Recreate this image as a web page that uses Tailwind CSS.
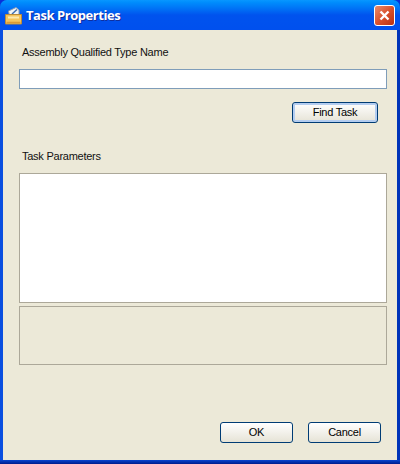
<!DOCTYPE html>
<html lang="en">
<head>
    <meta charset="UTF-8">
    <title>Task Properties</title>
    <script src="https://cdn.jsdelivr.net/npm/@tailwindcss/browser@4"></script>
</head>
<body class="w-[400px] h-[464px] overflow-hidden bg-[#0831d9]">
    <div class="w-[400px] h-[464px] flex flex-col rounded-t-[7px] overflow-hidden bg-gradient-to-r from-[#0a4fe0] via-[#0054e3] to-[#0033b8] font-['Liberation_Sans',sans-serif] text-[11px] tracking-[-0.25px] text-black">
        <!-- Title bar -->
        <div class="h-[30px] shrink-0 flex items-center pl-[5px] pr-[5px] bg-gradient-to-b from-[#0997ff] via-[#0053ee] to-[#0050ee]">
            <svg width="17" height="18" viewBox="0 0 17 18" class="shrink-0 mt-[1px]">
                <path d="M4.5 9 L3.5 4 L11 0.5 L14 3 L14 9 Z" fill="#f2f5f8" stroke="#8b9bb0"/>
                <path d="M7 7 L12 2.5" stroke="#3f6fb0" stroke-width="1.5"/>
                <path d="M0.5 7.5 L16.5 7.5 L16.5 17 L0.5 17 Z" fill="#f5c55e" stroke="#b98a3a"/>
                <path d="M3 10.5 L14 10.5" stroke="#fdeab0" stroke-width="2"/>
                <path d="M1.5 15.5 L15.5 15.5" stroke="#dc9a35" stroke-width="1.5"/>
            </svg>
            <span class="ml-[4px] text-[13px] leading-none font-bold text-white [text-shadow:1px_1px_0_#0f2f9f] font-['Open_Sans',sans-serif] tracking-[-0.45px]">Task Properties</span>
            <div class="ml-auto w-[21px] h-[21px] rounded-[3px] border border-white flex items-center justify-center bg-gradient-to-br from-[#e88a6c] via-[#d9512c] to-[#b92f10]">
                <svg width="13" height="13" viewBox="0 0 13 13"><path d="M2.5 2.5 L10.5 10.5 M10.5 2.5 L2.5 10.5" stroke="#fff" stroke-width="2.4"/></svg>
            </div>
        </div>
        <!-- Client area -->
        <div class="flex-1 mx-[3px] pl-[16px] pr-[9px] flex flex-col bg-[#ece9d8]">
            <label class="mt-[15px] ml-[3px] h-[14px] leading-[14px] text-[#111]">Assembly Qualified Type Name</label>
            <input type="text" class="mt-[10px] w-[368px] h-[20px] shrink-0 bg-white border border-[#7f9db9]">
            <button class="mt-[13px] ml-[273px] w-[86px] h-[21px] shrink-0 rounded-[3px] border border-[#003c74] bg-gradient-to-b from-white to-[#e6e3d6] shadow-[inset_0_0_0_2px_#b4cdf0] leading-none">Find Task</button>
            <label class="mt-[26px] ml-[3px] h-[14px] leading-[14px] text-[#111]">Task Parameters</label>
            <div class="mt-[10px] w-[368px] h-[130px] shrink-0 bg-white border border-[#aca899]"></div>
            <div class="mt-[3px] w-[368px] h-[59px] shrink-0 border border-[#aca899]"></div>
            <div class="mt-[57px] flex gap-[15px] ml-[201px]">
                <button class="w-[73px] h-[21px] rounded-[3px] border border-[#003c74] bg-gradient-to-b from-white to-[#e6e3d6] leading-none">OK</button>
                <button class="w-[73px] h-[21px] rounded-[3px] border border-[#003c74] bg-gradient-to-b from-white to-[#e6e3d6] leading-none">Cancel</button>
            </div>
        </div>
        <!-- Bottom window edge -->
        <div class="h-[4px] shrink-0 bg-gradient-to-b from-[#0a45d0] to-[#001a8c]"></div>
    </div>
</body>
</html>
